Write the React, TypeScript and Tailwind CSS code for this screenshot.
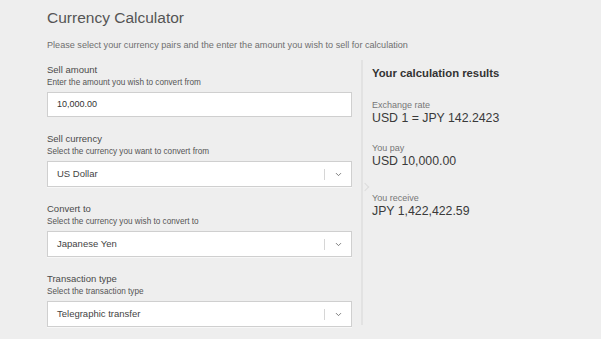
import { ChevronDown } from "lucide-react"

const font = { fontFamily: '"Liberation Sans", Arial, sans-serif' }

function Field({ label, help, children }: { label: string; help: string; children: React.ReactNode }) {
  return (
    <div className="flex flex-col">
      <div className="text-[9.5px] leading-[12px] text-[#4a4a4a]">{label}</div>
      <div className="mt-[2px] text-[8.2px] leading-[10px] text-[#555]">{help}</div>
      <div className="mt-[4px]">{children}</div>
    </div>
  )
}

function Select({ value }: { value: string }) {
  return (
    <div className="flex h-[26px] items-center border border-[#cfcfcf] bg-white pl-[9px] shadow-[0_1px_0_#f7f7f7]">
      <span className="flex-1 text-[9.5px] text-[#444]">{value}</span>
      <span className="h-[11px] w-px bg-[#d6d6d6]" />
      <span className="flex w-[26px] justify-center text-[#666]">
        <ChevronDown size={9} strokeWidth={2.2} />
      </span>
    </div>
  )
}

function Result({ label, value }: { label: string; value: string }) {
  return (
    <div className="flex flex-col">
      <div className="text-[9px] leading-[11px] text-[#777]">{label}</div>
      <div className="text-[12.3px] leading-[15px] text-[#3a3a3a]">{value}</div>
    </div>
  )
}

export default function App() {
  return (
    <div className="h-[339px] w-[601px] overflow-hidden bg-[#eeeeee]" style={font}>
      <div className="pl-[47px] pt-[7px]">
        <h1 className="text-[15.5px] font-light leading-[22px] text-[#555]">Currency Calculator</h1>
        <p className="mt-[11px] text-[9.1px] leading-[11px] text-[#6f6f6f]">
          Please select your currency pairs and the enter the amount you wish to sell for calculation
        </p>

        <div className="mt-[13px] flex">
          <div className="flex w-[305px] flex-col gap-[16px]">
            <Field label="Sell amount" help="Enter the amount you wish to convert from">
              <div className="flex h-[25px] items-center border border-[#cfcfcf] bg-white pl-[9px] text-[9px] text-[#333]">
                10,000.00
              </div>
            </Field>
            <Field label="Sell currency" help="Select the currency you want to convert from">
              <Select value="US Dollar" />
            </Field>
            <Field label="Convert to" help="Select the currency you wish to convert to">
              <Select value="Japanese Yen" />
            </Field>
            <Field label="Transaction type" help="Select the transaction type">
              <Select value="Telegraphic transfer" />
            </Field>
          </div>

          <div className="relative ml-[9px] mt-[-4px] h-[265px] w-[2px] bg-[#e2e2e2]">
            <div className="absolute left-[1px] top-[124px] h-[6px] w-[6px] rotate-45 border-r border-t border-[#dcdcdc]" />
          </div>

          <div className="ml-[9px] flex flex-col">
            <div className="mt-[2px] text-[11.3px] font-bold leading-[14px] text-[#333]">Your calculation results</div>
            <div className="mt-[20px] flex flex-col gap-[17px]">
              <Result label="Exchange rate" value="USD 1 = JPY 142.2423" />
              <Result label="You pay" value="USD 10,000.00" />
              <div className="mt-[7px]">
                <Result label="You receive" value="JPY 1,422,422.59" />
              </div>
            </div>
          </div>
        </div>
      </div>
    </div>
  )
}
